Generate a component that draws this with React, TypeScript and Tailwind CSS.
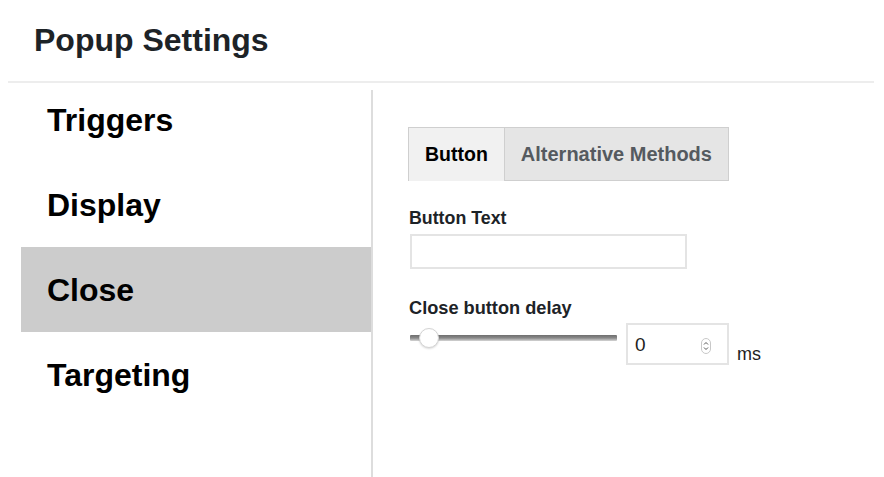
import React from 'react';

const sections = ['Triggers', 'Display', 'Close', 'Targeting'];

function Spinner() {
    return (
        <svg width="10" height="16" viewBox="0 0 10 16" fill="none">
            <rect x="0.5" y="0.5" width="9" height="15" rx="4.5" stroke="#c8c8c8" />
            <path d="M3 6.5 L5 4.5 L7 6.5" stroke="#555" strokeWidth="1" />
            <path d="M3 9.5 L5 11.5 L7 9.5" stroke="#555" strokeWidth="1" />
        </svg>
    );
}

export default function App() {
    const active = 'Close';

    return (
        <div className="w-[884px] h-[477px] bg-white overflow-hidden font-['Liberation_Sans',Arial,sans-serif]">
            {/* Header */}
            <div className="ml-2 mr-[10px] h-[83px] border-b-2 border-[#ededed] pl-[26px] pt-[21px]">
                <h1 className="text-[32px] leading-[38px] font-bold text-[#1d2327]">Popup Settings</h1>
            </div>

            <div className="flex h-[394px]">
                {/* Sidebar */}
                <ul className="ml-[21px] w-[350px] -mt-[6px]">
                    {sections.map((s) => (
                        <li
                            key={s}
                            className={`h-[85px] flex items-center pl-[26px] text-[32px] font-bold text-black ${
                                s === active ? 'bg-[#cccccc]' : ''
                            }`}
                        >
                            {s}
                        </li>
                    ))}
                </ul>

                {/* Panel */}
                <div className="mt-[7px] flex-1 border-l-2 border-[#dddddd] pl-[35px] pt-[37px]">
                    <div className="flex h-[54px]">
                        <div className="flex items-center border-t border-l border-[#cfcfcf] bg-[#f1f1f1] px-[16px] text-[19.5px] font-bold text-black">
                            Button
                        </div>
                        <div className="flex items-center border border-[#cfcfcf] bg-[#e5e5e5] px-[16px] text-[20px] font-bold text-[#555a5f]">
                            Alternative Methods
                        </div>
                    </div>

                    <div className="ml-px mt-[27px] text-[17.8px] leading-[20px] font-bold text-[#1d2327]">Button Text</div>
                    <div className="ml-[2px] mt-[6px] w-[277px] h-[35px] border-2 border-[#e4e4e4] bg-white" />

                    <div className="ml-px mt-[29px] text-[18.2px] leading-[20px] font-bold text-[#1d2327]">Close button delay</div>
                    <div className="ml-[2px] mt-[5px] flex items-start">
                        {/* Slider */}
                        <div className="relative mt-[5px] w-[207px] h-[20px]">
                            <div className="absolute left-0 right-0 top-[7px] h-[6px] rounded-[1px] bg-gradient-to-b from-[#6e6e6e] via-[#8a8a8a] to-[#d6d6d6]" />
                            <div className="absolute left-[9px] top-0 w-[20px] h-[20px] rounded-full bg-white border border-[#d4d4d4] shadow-[0_1px_2px_rgba(0,0,0,0.15)]" />
                        </div>

                        <div className="ml-[9px] flex items-center justify-between w-[103px] h-[42px] border-2 border-[#e4e4e4] pl-[7px] pr-[16px] pt-[3px]">
                            <span className="text-[19px] text-[#1e1e1e]">0</span>
                            <Spinner />
                        </div>

                        <span className="self-end mb-[1px] ml-[8px] text-[18px] leading-[20px] text-[#1e1e1e]">ms</span>
                    </div>
                </div>
            </div>
        </div>
    );
}
